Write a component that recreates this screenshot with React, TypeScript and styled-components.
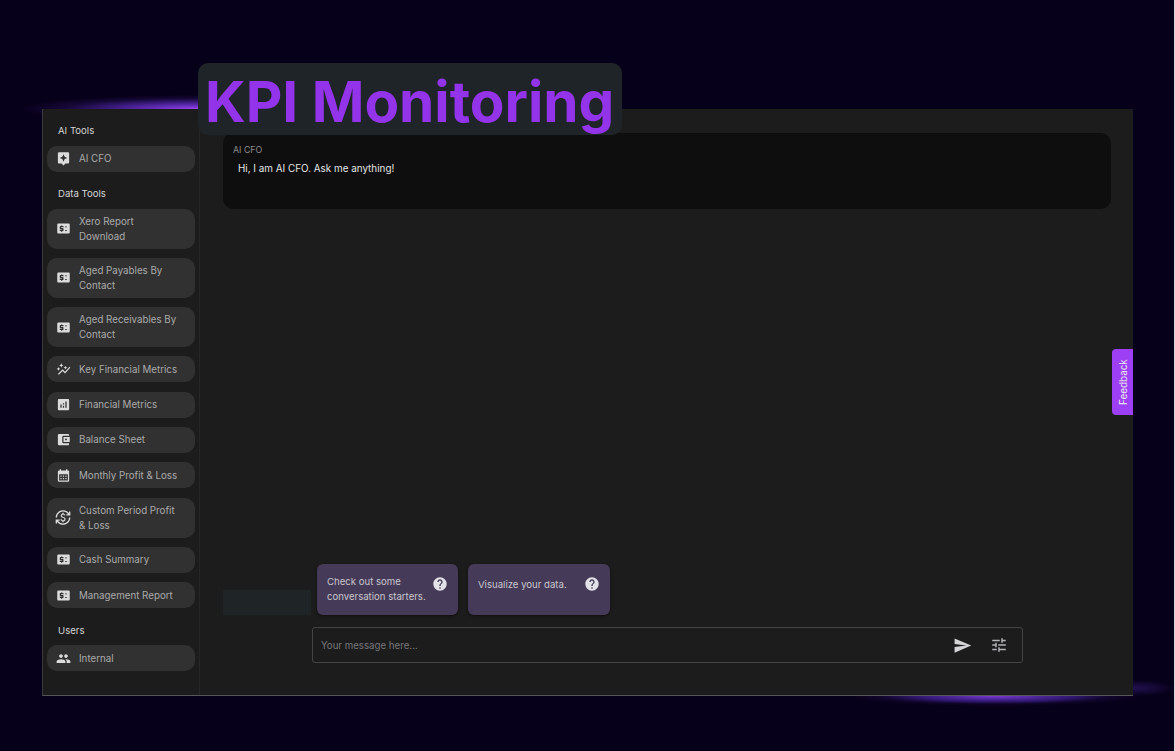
import React from "react";
import styled, { createGlobalStyle } from "styled-components";
import {
  MdAssistant,
  MdPriceChange,
  MdAutoGraph,
  MdAnalytics,
  MdAccountBalanceWallet,
  MdCalendarMonth,
  MdCurrencyExchange,
  MdPeople,
  MdHelp,
  MdSend,
  MdTune,
} from "react-icons/md";

const Global = createGlobalStyle`
  html, body { margin: 0; padding: 0; background: #d8d8d8; }
  body { font-family: Inter, "Liberation Sans", sans-serif; }
  * { box-sizing: border-box; }
`;

const Page = styled.div`
  position: relative;
  width: 1174px;
  height: 751px;
  overflow: hidden;
  background: #07001a;
  padding: 109px 41px 55px 42px;
`;

const GlowTop = styled.div`
  position: absolute;
  left: 20px;
  top: 95px;
  width: 360px;
  height: 28px;
  background: radial-gradient(ellipse 50% 50% at 50% 50%, #9a45f0 0%, #6a30c0 22%, #3a1a7c 50%, rgba(40,18,90,.45) 75%, rgba(30,12,70,0) 100%);
`;

const GlowBottom = styled.div`
  position: absolute;
  left: 850px;
  top: 686px;
  width: 290px;
  height: 20px;
  background: radial-gradient(ellipse 50% 50% at 50% 50%, #7f38d8 0%, #552aa5 25%, #30166f 55%, rgba(35,16,80,.35) 78%, rgba(30,12,70,0) 100%);
`;

const GlowSide = styled.div`
  position: absolute;
  left: 1110px;
  top: 680px;
  width: 64px;
  height: 16px;
  background: radial-gradient(ellipse 60% 50% at 40% 50%, #20104e 0%, rgba(32,16,78,.5) 55%, rgba(30,12,70,0) 100%);
`;

const Frame = styled.div`
  position: relative;
  display: flex;
  height: 587px;
  background: #1c1c1c;
  border-left: 1px solid #3a3a3c;
  border-bottom: 1px solid #55555a;
`;

const Sidebar = styled.aside`
  width: 157px;
  flex: none;
  border-right: 1px solid #262626;
  padding: 15px 4px 0 4px;
  display: flex;
  flex-direction: column;
`;

const SectionLabel = styled.div`
  font-size: 9.6px;
  line-height: 13px;
  color: #d5d5d5;
  padding-left: 11px;
  margin-bottom: 8.5px;
  &:not(:first-child) { margin-top: 15.5px; }
`;

const NavList = styled.div`
  display: flex;
  flex-direction: column;
  gap: 9.3px;
`;

const NavButton = styled.div`
  width: 148px;
  min-height: 26px;
  border-radius: 10px;
  background: #313131;
  display: flex;
  align-items: center;
  padding: 5px 8px;
  color: #ababab;
  font-size: 9.75px;
  line-height: 15px;
`;

const NavText = styled.span`
  max-width: 102px;
`;

const NavIconSlot = styled.span`
  width: 16px;
  height: 16px;
  flex: none;
  display: flex;
  align-items: center;
  justify-content: center;
  margin-right: 8px;
  color: #dcdcdc;
`;

const Main = styled.main`
  flex: 1;
  display: flex;
  flex-direction: column;
  padding: 24px 21px 32px 23px;
`;

const Bubble = styled.section`
  width: 888px;
  height: 76px;
  background: #0e0e0e;
  border-radius: 10px;
  padding: 11px 10px;
`;

const BubbleAuthor = styled.div`
  font-size: 8.8px;
  line-height: 12px;
  color: #8c8c8c;
`;

const BubbleText = styled.p`
  margin: 5px 0 0 5px;
  font-size: 9.9px;
  line-height: 14px;
  color: #e4e4e4;
`;

const Suggestions = styled.div`
  margin-top: auto;
  display: flex;
  align-items: flex-end;
`;

const Shade = styled.div`
  width: 88px;
  height: 25px;
  background: #1f2527;
  margin-right: 6px;
`;

const SuggestionCard = styled.div`
  width: 141px;
  height: 51px;
  border-radius: 6px;
  background: #453a57;
  box-shadow: 0 1px 3px rgba(0,0,0,.5);
  padding: 10px 10px 0 10px;
  margin-right: 10px;
  display: flex;
  justify-content: space-between;
  font-size: 9.6px;
  line-height: 15px;
  color: #c9c6ce;
  svg { flex: none; color: #e4e2e8; margin: 2px 0 0 0; }
  & + & { width: 142px; }
`;

const SuggestionText = styled.span<{ $single?: boolean }>`
  padding-top: ${(p) => (p.$single ? 3 : 0)}px;
`;

const InputBar = styled.div`
  margin: 12px 0 0 89px;
  width: 711px;
  height: 36px;
  border: 1px solid #444446;
  border-radius: 3px;
  display: flex;
  align-items: center;
  padding: 0 14px 0 8px;
`;

const Placeholder = styled.span`
  flex: 1;
  font-size: 9.7px;
  color: #77777a;
`;

const InputIcons = styled.div`
  display: flex;
  align-items: center;
  gap: 18px;
  color: #d4d4d6;
  svg:last-child { color: #b4b4b8; }
`;

const Title = styled.h1`
  position: absolute;
  left: 198px;
  top: 63px;
  margin: 0;
  width: 424px;
  height: 72px;
  border-radius: 10px;
  background: #1f2429;
  color: #9333ea;
  font-size: 56.6px;
  font-weight: 700;
  line-height: 77px;
  padding-left: 7px;
  white-space: nowrap;
`;

const Feedback = styled.div`
  position: absolute;
  right: 0;
  top: 240px;
  width: 21px;
  height: 66px;
  background: #9d3ff5;
  color: #eee;
  font-size: 9.9px;
  display: flex;
  align-items: center;
  justify-content: center;
  writing-mode: vertical-rl;
  rotate: 180deg;
  border-radius: 0 4px 4px 0;
`;

const groups = [
  { title: "AI Tools", items: [{ Icon: MdAssistant, text: "AI CFO" }] },
  {
    title: "Data Tools",
    items: [
      { Icon: MdPriceChange, text: "Xero Report Download" },
      { Icon: MdPriceChange, text: "Aged Payables By Contact" },
      { Icon: MdPriceChange, text: "Aged Receivables By Contact" },
      { Icon: MdAutoGraph, text: "Key Financial Metrics" },
      { Icon: MdAnalytics, text: "Financial Metrics" },
      { Icon: MdAccountBalanceWallet, text: "Balance Sheet" },
      { Icon: MdCalendarMonth, text: "Monthly Profit & Loss" },
      { Icon: MdCurrencyExchange, text: "Custom Period Profit & Loss" },
      { Icon: MdPriceChange, text: "Cash Summary" },
      { Icon: MdPriceChange, text: "Management Report" },
    ],
  },
  { title: "Users", items: [{ Icon: MdPeople, text: "Internal" }] },
];

export default function App() {
  return (
    <Page>
      <Global />
      <GlowTop />
      <GlowBottom />
      <GlowSide />
      <Frame>
        <Sidebar>
          {groups.map((g) => (
            <React.Fragment key={g.title}>
              <SectionLabel>{g.title}</SectionLabel>
              <NavList>
                {g.items.map(({ Icon, text }) => (
                  <NavButton key={text}>
                    <NavIconSlot>
                      <Icon size={text.startsWith("Custom") ? 17 : 15} />
                    </NavIconSlot>
                    <NavText>{text}</NavText>
                  </NavButton>
                ))}
              </NavList>
            </React.Fragment>
          ))}
        </Sidebar>
        <Main>
          <Bubble>
            <BubbleAuthor>AI CFO</BubbleAuthor>
            <BubbleText>Hi, I am AI CFO. Ask me anything!</BubbleText>
          </Bubble>
          <Suggestions>
            <Shade />
            <SuggestionCard>
              <SuggestionText>Check out some<br />conversation starters.</SuggestionText>
              <MdHelp size={16} />
            </SuggestionCard>
            <SuggestionCard>
              <SuggestionText $single>Visualize your data.</SuggestionText>
              <MdHelp size={16} />
            </SuggestionCard>
          </Suggestions>
          <InputBar>
            <Placeholder>Your message here...</Placeholder>
            <InputIcons>
              <MdSend size={19} />
              <MdTune size={18} />
            </InputIcons>
          </InputBar>
        </Main>
        <Feedback>Feedback</Feedback>
      </Frame>
      <Title>KPI Monitoring</Title>
    </Page>
  );
}
